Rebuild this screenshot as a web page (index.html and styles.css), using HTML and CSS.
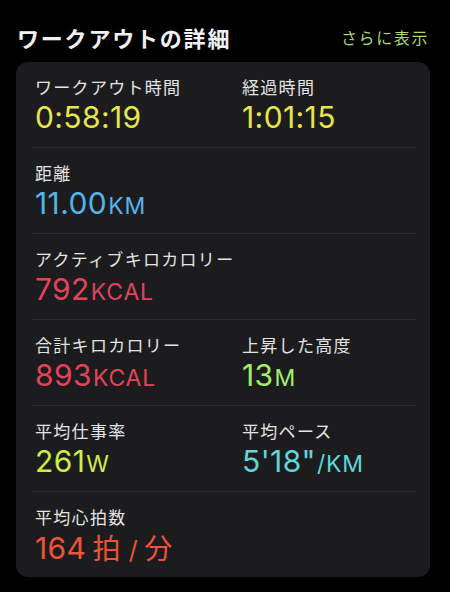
FILE: index.html
```html
<!DOCTYPE html>
<html lang="ja">
<head>
  <meta charset="UTF-8">
  <meta name="viewport" content="width=device-width, initial-scale=1.0">
  <title>ワークアウトの詳細</title>
  <link rel="stylesheet" href="styles.css">
</head>
<body>
  <header class="head">
    <h1 class="title">ワークアウトの詳細</h1>
    <a class="more" href="#">さらに表示</a>
  </header>

  <section class="card">
    <div class="row">
      <div class="metric">
        <div class="label">ワークアウト時間</div>
        <div class="value yellow">0:58:19</div>
      </div>
      <div class="metric">
        <div class="label">経過時間</div>
        <div class="value yellow">1:01:15</div>
      </div>
    </div>

    <div class="row">
      <div class="metric">
        <div class="label">距離</div>
        <div class="value blue">11.00<span class="unit">KM</span></div>
      </div>
    </div>

    <div class="row">
      <div class="metric wide">
        <div class="label">アクティブキロカロリー</div>
        <div class="value red">792<span class="unit">KCAL</span></div>
      </div>
    </div>

    <div class="row">
      <div class="metric">
        <div class="label">合計キロカロリー</div>
        <div class="value red">893<span class="unit">KCAL</span></div>
      </div>
      <div class="metric">
        <div class="label">上昇した高度</div>
        <div class="value green">13<span class="unit">M</span></div>
      </div>
    </div>

    <div class="row">
      <div class="metric">
        <div class="label">平均仕事率</div>
        <div class="value lime">261<span class="unit">W</span></div>
      </div>
      <div class="metric">
        <div class="label">平均ペース</div>
        <div class="value cyan">5'18"<span class="unit">/KM</span></div>
      </div>
    </div>

    <div class="row">
      <div class="metric">
        <div class="label">平均心拍数</div>
        <div class="value orange">164<span class="jp">拍</span><span class="slash">/</span><span class="jp">分</span></div>
      </div>
    </div>
  </section>
</body>
</html>
```

FILE: styles.css
```css
body {
  margin: 0;
  background-color: #000;
  color: #e6e6e6;
  font-family: Inter, "Noto Sans CJK JP", sans-serif;
  width: 450px;
}
.head {
  display: flex;
  align-items: center;
  justify-content: space-between;
  padding: 24px 21px 0 17px;
  height: 26px;
  margin-bottom: 12px;
}
.title {
  margin: 0;
  font-family: "Noto Sans CJK JP", sans-serif;
  font-size: 22px;
  font-weight: 700;
  letter-spacing: 1.8px;
  color: #f2f2f2;
}
.more {
  font-family: "Noto Sans CJK JP", sans-serif;
  font-size: 16px;
  letter-spacing: 1.6px;
  color: #a9d86b;
  text-decoration: none;
}
.card {
  margin: 0 20px 0 16px;
  padding: 0 15px 0 17px;
  background-color: #1c1c1e;
  border-radius: 12px;
}
.row {
  display: grid;
  grid-template-columns: 207px 1fr;
  height: 85px;
  padding-left: 2px;
  border-bottom: 1px solid #2c2c2e;
}
.row:last-child {
  border-bottom: none;
}
.metric {
  padding-top: 14px;
}
.metric.wide {
  grid-column: 1 / 3;
}
.label {
  font-family: "Noto Sans CJK JP", sans-serif;
  font-size: 17px;
  line-height: 22px;
  letter-spacing: 1.3px;
  color: #e4e4e4;
}
.value {
  font-size: 30px;
  font-weight: 400;
  line-height: 38px;
  letter-spacing: 0.4px;
}
.unit {
  font-size: 23px;
  letter-spacing: 0.8px;
  margin-left: 1px;
}
.jp {
  font-family: "Noto Sans CJK JP", sans-serif;
  font-size: 28px;
  margin-left: 6px;
}
.slash {
  font-size: 25px;
  margin-left: 8px;
}
.yellow { color: #e8e54a; }
.blue { color: #55b4ea; }
.red { color: #e2435b; }
.green { color: #a2ee6c; }
.lime { color: #cbec4a; }
.cyan { color: #5ed6da; }
.orange { color: #ec5337; }
```
